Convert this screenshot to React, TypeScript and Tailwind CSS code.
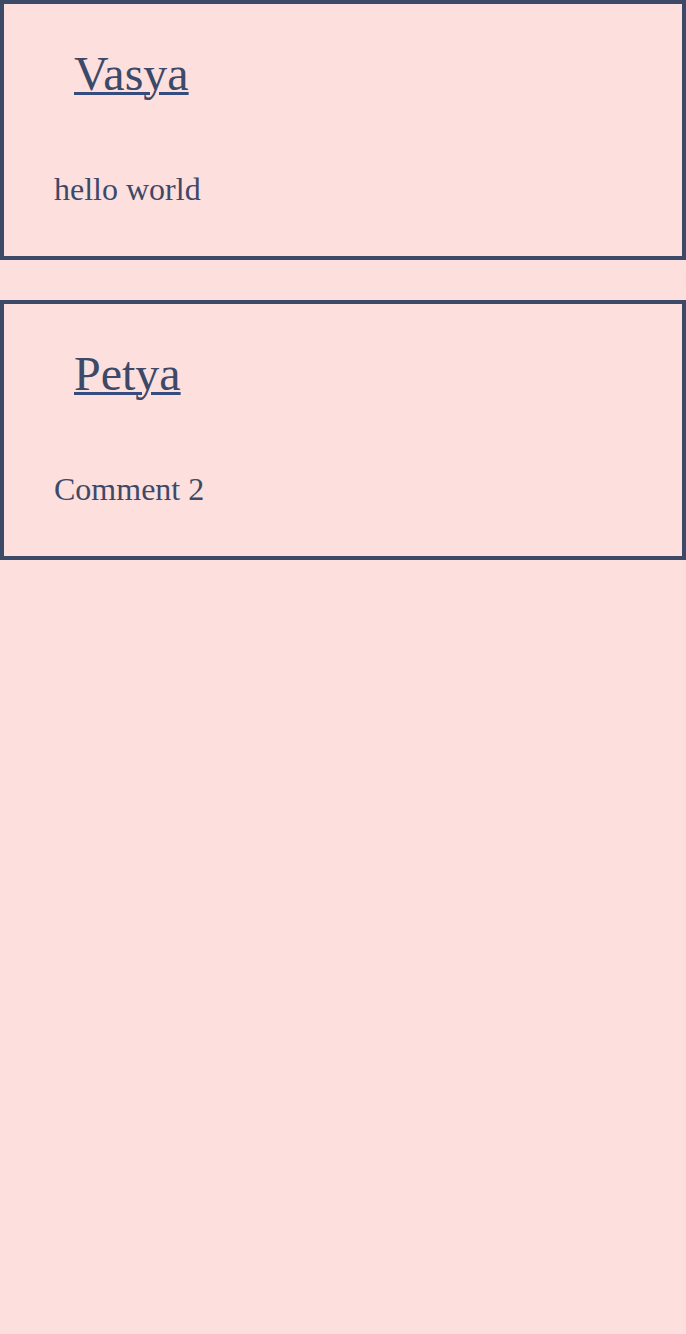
const comments = [
  { author: 'Vasya', text: 'hello world' },
  { author: 'Petya', text: 'Comment 2' },
];

export default function App() {
  return (
    <div className="min-h-[1334px] bg-[#fddfdd] font-['Liberation_Serif',serif] text-[#3c4968]">
      <div className="flex flex-col gap-[40px]">
        {comments.map((c) => (
          <div key={c.author} className="h-[260px] border-4 border-[#3c4a67] pl-[50px] pt-[43px]">
            <a
              href="#"
              className="ml-[20px] block w-fit text-[48px] leading-[53px] underline decoration-[#344d7e] decoration-[3px]"
            >
              {c.author}
            </a>
            <p className="mt-[72px] text-[32px] leading-[35px]">{c.text}</p>
          </div>
        ))}
      </div>
    </div>
  );
}
